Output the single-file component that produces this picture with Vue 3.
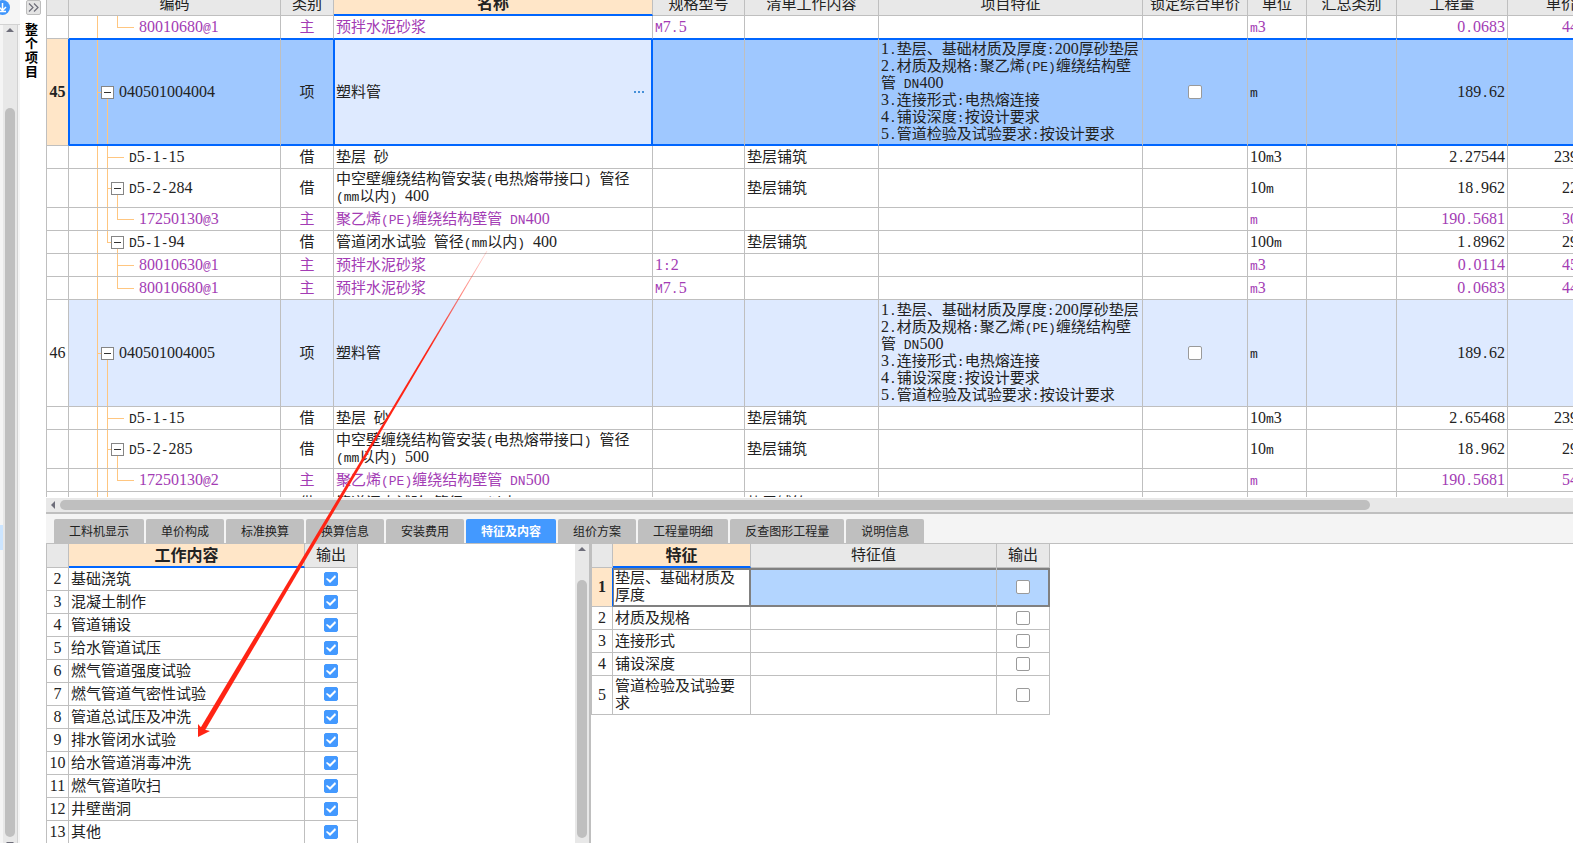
<script setup>
import { h } from 'vue'

// Western runs are set half the width of a Chinese character:
// digits in a serif face, everything else in a monospaced one.
const Mixed = (props) =>
  h(
    'span',
    { class: 'mixed' },
    props.text
      .split(/([0-9]+|[\x20-\x2f\x3a-\x7e]+)/)
      .filter(Boolean)
      .map((part) => {
        if (/^[0-9]/.test(part)) return h('span', { class: 'num' }, part)
        return /^[\x20-\x7e]/.test(part) ? h('span', { class: 'lat' }, part) : part
      })
  )
Mixed.props = ['text']

const features = (dn) => [
  '1.垫层、基础材质及厚度:200厚砂垫层',
  '2.材质及规格:聚乙烯(PE)缠绕结构壁',
  '管 DN' + dn,
  '3.连接形式:电热熔连接',
  '4.铺设深度:按设计要求',
  '5.管道检验及试验要求:按设计要求',
]
const bed = (qty) => ({ tree: 'leaf1', code: 'D5-1-15', kind: '借', name: ['垫层 砂'], work: '垫层铺筑', unit: '10m3', qty, price: '239', wide: true })
const install = (code, dn, price) => ({
  tree: 'branch', code, kind: '借', name: ['中空壁缠绕结构管安装(电热熔带接口) 管径', '(mm以内) ' + dn], work: '垫层铺筑', unit: '10m', qty: '18.962', price,
})
const pipe = (code, dn, price) => ({ tree: 'leaf2 through last', code, kind: '主', name: ['聚乙烯(PE)缠绕结构壁管 DN' + dn], unit: 'm', qty: '190.5681', price, material: true })
const mortar = (code, spec, qty, price, last) => ({ tree: last ? 'leaf2 last' : 'leaf2', code, kind: '主', name: ['预拌水泥砂浆'], spec, unit: 'm3', qty, price, material: true })

const rows = [
  { ...mortar('80010680@1', 'M7.5', '0.0683', '44', true), before: true },
  { no: '45', tree: 'root', code: '040501004004', kind: '项', name: ['塑料管'], features: features(400), lock: true, unit: 'm', qty: '189.62', selected: true },
  bed('2.27544'),
  install('D5-2-284', 400, '22'),
  pipe('17250130@3', 400, '30'),
  { tree: 'branch last', code: 'D5-1-94', kind: '借', name: ['管道闭水试验 管径(mm以内) 400'], work: '垫层铺筑', unit: '100m', qty: '1.8962', price: '29' },
  mortar('80010630@1', '1:2', '0.0114', '45', false),
  mortar('80010680@1', 'M7.5', '0.0683', '44', true),
  { no: '46', tree: 'root', code: '040501004005', kind: '项', name: ['塑料管'], features: features(500), lock: true, unit: 'm', qty: '189.62', item: true },
  bed('2.65468'),
  install('D5-2-285', 500, '29'),
  pipe('17250130@2', 500, '54'),
  { tree: 'branch last', code: 'D5-1-94', kind: '借', name: ['管道闭水试验 管径(mm以内) 500'], work: '垫层铺筑', unit: '100m', qty: '1.8962', price: '29' },
]

const tabs = ['工料机显示', '单价构成', '标准换算', '换算信息', '安装费用', '特征及内容', '组价方案', '工程量明细', '反查图形工程量', '说明信息']
const works = ['基础浇筑', '混凝土制作', '管道铺设', '给水管道试压', '燃气管道强度试验', '燃气管道气密性试验', '管道总试压及冲洗', '排水管闭水试验', '给水管道消毒冲洗', '燃气管道吹扫', '井壁凿洞', '其他']
const traits = [['垫层、基础材质及', '厚度'], ['材质及规格'], ['连接形式'], ['铺设深度'], ['管道检验及试验要', '求']]
</script>

<template>
  <div class="app">
    <aside class="rail">
      <div class="rail-head">
        <svg width="10" height="16" viewBox="0 0 10 16" aria-hidden="true">
          <circle cx="2.500" cy="7.500" r="7.500" fill="#3f95fb" />
          <path d="M2.500 3v7M-1 7l3.500 3.500L6 7M-2 11.500h8" fill="none" stroke="#fff" stroke-width="1.500" />
        </svg>
      </div>
      <div class="rail-body">
        <div class="rail-tree"><span class="rail-mark"></span></div>
        <div class="vbar rail-bar"><i class="up"></i><i class="thumb"></i><i class="down"></i></div>
      </div>
    </aside>

    <nav class="side">
      <button class="expand" type="button" aria-label="展开">
        <svg width="11" height="9" viewBox="0 0 11 9"><path d="M1 .5l4 4-4 4M6 .5l4 4-4 4" fill="none" stroke="#6c6c78" stroke-width="1.200" /></svg>
      </button>
      <button class="project" type="button">整个项目</button>
    </nav>

    <main class="main">
      <section class="upper">
        <div class="sheet">
          <table class="grid bill">
            <colgroup>
              <col class="w-no" /><col class="w-code" /><col class="w-kind" /><col class="w-name" /><col class="w-spec" /><col class="w-work" />
              <col class="w-feat" /><col class="w-lock" /><col class="w-unit" /><col class="w-sum" /><col class="w-qty" /><col />
            </colgroup>
            <thead>
              <tr>
                <th></th><th>编码</th><th>类别</th><th class="current">名称</th><th>规格型号</th><th>清单工作内容</th>
                <th>项目特征</th><th>锁定综合单价</th><th>单位</th><th>汇总类别</th><th>工程量</th><th class="price">单价</th>
              </tr>
            </thead>
            <tbody>
              <tr v-for="(r, i) in rows" :key="i" :class="{ material: r.material, item: r.item, selected: r.selected, before: r.before }">
                <td class="no"><Mixed v-if="r.no" :text="r.no" /></td>
                <td class="tree" :class="r.tree">
                  <div class="node">
                    <button v-if="!r.tree.startsWith('leaf')" class="toggle" type="button" :aria-label="'折叠 ' + r.code"></button>
                    <Mixed :text="r.code" />
                  </div>
                </td>
                <td class="mid">{{ r.kind }}</td>
                <td class="name">
                  <div class="name-box">
                    <div><div v-for="l in r.name" :key="l" class="line"><Mixed :text="l" /></div></div>
                    <button v-if="r.selected" class="more" type="button" aria-label="更多"><i></i><i></i><i></i></button>
                  </div>
                </td>
                <td><div v-if="r.spec" class="line"><Mixed :text="r.spec" /></div></td>
                <td>{{ r.work }}</td>
                <td><div v-for="l in r.features" :key="l" class="line"><Mixed :text="l" /></div></td>
                <td class="tick"><input v-if="r.lock" type="checkbox" :aria-label="'锁定综合单价 ' + r.code" /></td>
                <td><div class="line"><Mixed :text="r.unit" /></div></td>
                <td></td>
                <td class="qty"><div class="line"><Mixed :text="r.qty" /></div></td>
                <td class="price" :class="{ wide: r.wide }"><div v-if="r.price" class="line"><Mixed :text="r.price" /></div></td>
              </tr>
            </tbody>
          </table>
        </div>
        <div class="hbar"><i class="left"></i><i class="thumb"></i><i class="rest"></i></div>
      </section>

      <section class="lower">
        <div class="tabs" role="tablist">
          <button v-for="t in tabs" :key="t" type="button" role="tab" :aria-selected="t === '特征及内容'" :class="{ on: t === '特征及内容' }">{{ t }}</button>
        </div>
        <div class="panes">
          <div class="pane-left">
            <div class="scroll">
              <table class="grid works">
                <colgroup><col class="w-no" /><col class="w-job" /><col class="w-out" /></colgroup>
                <thead><tr><th></th><th class="current">工作内容</th><th>输出</th></tr></thead>
                <tbody>
                  <tr v-for="(w, i) in works" :key="w">
                    <td class="no"><Mixed :text="String(i + 2)" /></td>
                    <td>{{ w }}</td>
                    <td class="tick"><input type="checkbox" checked :aria-label="'输出 ' + w" /></td>
                  </tr>
                </tbody>
              </table>
            </div>
            <div class="vbar"><i class="up"></i><i class="thumb"></i></div>
          </div>
          <div class="pane-right">
            <table class="grid traits">
              <colgroup><col class="w-tno" /><col class="w-trait" /><col class="w-value" /><col class="w-out" /></colgroup>
              <thead><tr><th></th><th class="current">特征</th><th>特征值</th><th>输出</th></tr></thead>
              <tbody>
                <tr v-for="(t, i) in traits" :key="i" :class="{ picked: i === 0 }">
                  <td class="no"><Mixed :text="String(i + 1)" /></td>
                  <td><div v-for="l in t" :key="l" class="line">{{ l }}</div></td>
                  <td></td>
                  <td class="tick"><input type="checkbox" :aria-label="'输出 ' + t.join('')" /></td>
                </tr>
              </tbody>
            </table>
          </div>
        </div>
      </section>
    </main>

    <svg class="arrow" width="300" height="490" viewBox="0 0 300 490" aria-hidden="true">
      <defs>
        <linearGradient id="fade" gradientUnits="userSpaceOnUse" x1="292" y1="0" x2="232" y2="100">
          <stop offset="0" stop-color="#ff2414" stop-opacity="0.200" />
          <stop offset="1" stop-color="#ff2414" />
        </linearGradient>
      </defs>
      <path d="M291.600 1L4.500 479.500 9 482 292.400 1z" fill="url(#fade)" />
      <path d="M3 487V474l4 4.500 2 1 6 1.500z" fill="#ff2414" />
    </svg>
  </div>
</template>

<style>
html,
body {
  height: 100%;
  overflow: hidden;
  background: #fff;
}
</style>

<style scoped>
.app {
  position: relative;
  display: flex;
  height: 100vh;
  overflow: hidden;
  background: #fff;
  color: #222;
  font: 15px/17px "Noto Sans CJK SC", sans-serif;
}
button {
  padding: 0;
  border: 0;
  font: inherit;
  color: inherit;
}

/* left rail */
.rail {
  display: flex;
  flex-direction: column;
  flex: none;
  width: 20px;
  background: #f5f5f5;
}
.rail-head {
  height: 24px;
  border-bottom: 1px solid #d2d2d2;
}
.rail-head svg {
  display: block;
}
.rail-body {
  display: flex;
  flex: 1;
}
.rail-tree {
  display: flex;
  flex-direction: column;
  width: 3px;
  padding-top: 500px;
}
.rail-mark {
  height: 25px;
  background: #cce5ff;
}
.vbar {
  display: flex;
  flex-direction: column;
  align-items: center;
  flex: none;
  width: 14px;
  background: #e8e8e8;
}
.vbar .up,
.vbar .down {
  flex: none;
  margin-top: 3px;
  border: 4px solid transparent;
  border-top: 0;
  border-bottom-color: #6e6e7a;
}
.vbar .down {
  margin: 0 0 -3px;
  border: 4px solid transparent;
  border-bottom: 0;
  border-top-color: #6e6e7a;
}
.vbar .thumb {
  flex: 1;
  width: 10px;
  margin: 29px 0 5px;
  border-radius: 5px;
  background: #bfbfbf;
}
.rail-bar {
  border-right: 1px solid #d2d2d2;
}
.rail-bar .thumb {
  margin-top: 76px;
}

/* vertical navigation */
.side {
  display: flex;
  flex-direction: column;
  align-items: center;
  flex: none;
  width: 26px;
}
.expand {
  display: flex;
  align-items: center;
  justify-content: center;
  width: 15px;
  height: 15px;
  border: 1px solid #bdbdbd;
  border-radius: 2px;
  background: #e4e4e4;
}
.project {
  width: 14px;
  margin: 7px 3px 0 0;
  background: none;
  color: #000;
  font-size: 13px;
  line-height: 14px;
  font-weight: 700;
  white-space: normal;
  word-break: break-all;
}

/* split view */
.main {
  display: flex;
  flex-direction: column;
  flex: 1;
  min-width: 0;
}
.upper {
  display: flex;
  flex-direction: column;
  flex: 514 1 0;
  min-height: 0;
}
.sheet {
  flex: 1;
  min-height: 0;
  overflow: hidden;
  margin-bottom: 1px;
}
.hbar {
  display: flex;
  align-items: center;
  flex: none;
  height: 14px;
  border-bottom: 2px solid #bfbfbf;
  background: #e8e8e8;
}
.hbar .left {
  margin: 0 5px;
  border: 4px solid transparent;
  border-left: 0;
  border-right-color: #6e6e7a;
}
.hbar .thumb {
  flex: 1310;
  height: 10px;
  border-radius: 5px;
  background: #bfbfbf;
}
.hbar .rest {
  flex: 203;
}
.lower {
  display: flex;
  flex-direction: column;
  flex: 329 1 0;
  min-height: 0;
}
.tabs {
  display: flex;
  gap: 2px;
  flex: none;
  padding: 5px 8px 0;
  border-bottom: 1px solid #bfbfbf;
  background: #f4f4f4;
}
.tabs button {
  height: 24px;
  padding: 0 15px 2px;
  border-radius: 2px 2px 0 0;
  background: #bfbfbf;
  font-size: 12px;
  white-space: nowrap;
}
.tabs .on {
  background: #4399ff;
  color: #fff;
  font-weight: 700;
}
.panes {
  display: flex;
  flex: 1;
  min-height: 0;
}
.pane-left {
  display: flex;
  flex: none;
  width: 543px;
}
.scroll {
  flex: 1;
  overflow: hidden;
}
.pane-right {
  flex: 1;
  min-width: 0;
  overflow: hidden;
  border-left: 2px solid #bfbfbf;
}

/* grids */
.grid {
  table-layout: fixed;
  border-collapse: separate;
  border-spacing: 0;
  border-left: 1px solid #bfbfbf;
}
.bill {
  width: 100%;
  margin-top: -7px;
}
.works {
  width: 312px;
}
.traits {
  width: 459px;
}
.w-no { width: 22px; }
.w-code { width: 212px; }
.w-kind { width: 53px; }
.w-name { width: 319px; }
.w-spec { width: 92px; }
.w-work { width: 134px; }
.w-feat { width: 264px; }
.w-lock { width: 105px; }
.w-unit { width: 59px; }
.w-sum { width: 90px; }
.w-qty { width: 111px; }
.w-job { width: 236px; }
.w-out { width: 53px; }
.w-tno { width: 21px; }
.w-trait { width: 138px; }
.w-value { width: 246px; }
.grid th,
.grid td {
  box-sizing: border-box;
  height: 23px;
  padding: 0 2px 4px;
  border: 0 solid #bfbfbf;
  border-width: 0 1px 1px 0;
  overflow: hidden;
  text-align: left;
  vertical-align: middle;
  white-space: nowrap;
}
.grid th {
  height: 24px;
  padding: 0 0 4px;
  background: #e8e8e8;
  font-weight: 400;
  text-align: center;
}
.bill th {
  height: 23px;
}
.grid th.current {
  padding-bottom: 2px;
  border-bottom: 2px solid #0066ff;
  background: #ffe6c8;
  font-size: 16px;
  font-weight: 700;
}
.grid :deep(.lat) {
  font-family: "Liberation Mono", monospace;
  font-size: 13px;
  line-height: 1;
  white-space: pre;
}
.grid :deep(.num) {
  font-family: "Liberation Serif", serif;
  font-size: 16px;
  line-height: 1;
}
.line {
  height: 17px;
}
.grid td.no {
  padding: 0 0 2px;
  text-align: center;
}
.grid td.mid {
  text-align: center;
}
.grid td.tick {
  padding: 2px;
}
.grid td.qty {
  text-align: right;
}
.grid .price {
  border-right: 0;
}
.grid th.price {
  padding-left: 38px;
  text-align: left;
}
.grid td.price {
  padding-left: 54px;
}
.grid td.price.wide {
  padding-left: 46px;
}
.material td {
  color: #a33cb4;
}
.grid .item td:not(.no) {
  background-color: #deeaff;
}

/* tree guides */
.grid td.tree {
  --near: 100%;
  --near-y: 0;
  --far: 0%;
  --far-y: 0;
  --arm: 17px;
  --arm-x: 38px;
  --ink: linear-gradient(#ffc680, #ffc680);
  padding: 0 2px 0 60px;
  background-image: var(--ink), var(--ink), var(--ink), var(--ink);
  background-repeat: no-repeat;
  background-size: 1px 100%, 1px var(--near), 1px var(--far), var(--arm) 1px;
  background-position: 28px 0, 38px var(--near-y), 48px var(--far-y), var(--arm-x) 50%;
}
.grid td.tree.root {
  --near: 50%;
  --near-y: 100%;
  --arm: 4px;
  --arm-x: 28px;
  padding-left: 32px;
}
.grid td.tree.branch {
  --far: 50%;
  --far-y: 100%;
  --arm: 4px;
  padding-left: 42px;
}
.grid td.tree.branch.last {
  --near: 50%;
}
.grid td.tree.leaf2 {
  --near: 0%;
  --far: 100%;
  --arm-x: 48px;
  padding-left: 70px;
}
.grid td.tree.leaf2.through {
  --near: 100%;
}
.grid td.tree.leaf2.last {
  --far: 50%;
}
.node {
  display: flex;
  align-items: center;
  gap: 5px;
}
.node :deep(.mixed) {
  padding-bottom: 2px;
}
.toggle {
  width: 13px;
  height: 13px;
  flex: none;
  border: 1px solid #858585;
  background: linear-gradient(#333, #333) center / 7px 1px no-repeat #fff;
}
.name-box {
  display: flex;
  align-items: center;
  justify-content: space-between;
}
.more {
  display: flex;
  gap: 2px;
  margin: 4px 6px 0 0;
  background: none;
}
.more i {
  width: 2px;
  height: 2px;
  background: #4590d8;
}

/* selected rows */
.grid .before td:not(.no) {
  border-bottom-color: #0066ff;
}
.grid .selected td:not(.no) {
  border-bottom-color: #0066ff;
  background-color: #9fc8ff;
  box-shadow: inset 0 1px #0066ff, inset 0 -1px #0066ff;
}
.grid .selected td.no,
.grid .picked td.no {
  border-right-color: #0066ff;
  background: #ffe6c8;
  font-weight: 700;
}
.grid .selected td.tree:not(.no) {
  box-shadow: inset 1px 1px #0066ff, inset 0 -1px #0066ff;
}
.grid .selected td:nth-child(3) {
  border-right-color: #0066ff;
}
.grid .selected td.name:not(.no) {
  border-right-color: #0066ff;
  background-color: #deeaff;
  box-shadow: inset 1px 1px #0066ff, inset -1px -1px #0066ff;
}
.picked td:not(.no) {
  border-bottom-color: #808080;
  background: #b3d5ff;
  box-shadow: inset 0 2px #808080, inset 0 -1px #808080;
}
.picked td:nth-child(2) {
  border-right-color: #808080;
  background: #fff;
  box-shadow: inset 1px 2px #808080, inset -1px -1px #808080;
}
.picked td:nth-child(4) {
  border-right-color: #808080;
  box-shadow: inset 0 2px #808080, inset -1px -1px #808080;
}

/* tick boxes */
input[type="checkbox"] {
  display: block;
  width: 14px;
  height: 14px;
  margin: 0 auto;
  border: 1px solid #9a9a9a;
  border-radius: 2px;
  background: #fff;
  appearance: none;
}
input[type="checkbox"]:checked {
  border-color: #4399ff;
  background: #4399ff;
}
input[type="checkbox"]:checked::after {
  content: "";
  display: block;
  width: 12px;
  height: 12px;
  background: #fff;
  clip-path: polygon(1px 6px, 2px 5px, 5px 7px, 10px 2px, 11px 4px, 5px 10px);
}

/* annotation */
.arrow {
  position: absolute;
  left: 195px;
  top: 250px;
  pointer-events: none;
}
</style>
